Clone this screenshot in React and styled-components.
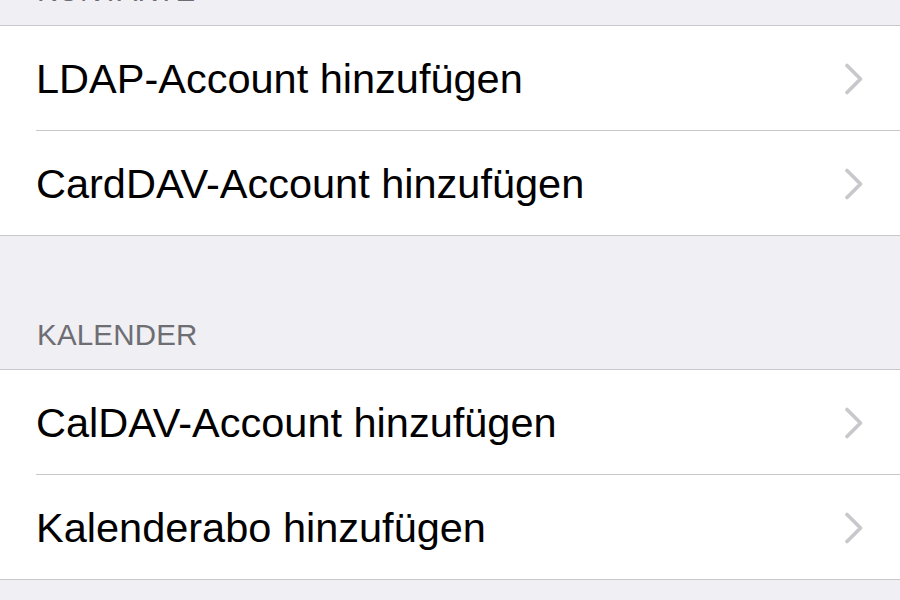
import React from 'react';
import styled, { createGlobalStyle } from 'styled-components';

const GlobalStyle = createGlobalStyle`
    html, body {
        margin: 0;
        padding: 0;
        background: #efeff4;
        font-family: "Liberation Sans", Arial, sans-serif;
        -webkit-font-smoothing: antialiased;
    }
`;

const sections = [
    {
        title: 'KONTAKTE',
        height: 25,
        items: ['LDAP-Account hinzufügen', 'CardDAV-Account hinzufügen'],
    },
    {
        title: 'KALENDER',
        height: 133,
        items: ['CalDAV-Account hinzufügen', 'Kalenderabo hinzufügen'],
    },
];

function Chevron() {
    return (
        <svg width="20" height="32" viewBox="0 0 20 32">
            <polyline
                points="3,2.5 16.5,16 3,29.5"
                fill="none"
                stroke="#c7c7cc"
                strokeWidth="3.6"
                strokeLinecap="round"
                strokeLinejoin="round"
            />
        </svg>
    );
}

export default function App() {
    return (
        <>
            <GlobalStyle />
            <Page>
                {sections.map((section) => (
                    <div key={section.title}>
                        <Header $height={section.height}>
                            <Label>{section.title}</Label>
                        </Header>
                        <Group>
                            {section.items.map((item, i) => (
                                <Row key={item} $last={i === section.items.length - 1}>
                                    <Title>{item}</Title>
                                    <Chevron />
                                </Row>
                            ))}
                        </Group>
                    </div>
                ))}
            </Page>
        </>
    );
}

const Page = styled.div`
    width: 900px;
    height: 600px;
    overflow: hidden;
    background: #efeff4;
`;

const Header = styled.div`
    height: ${(p) => p.$height}px;
    display: flex;
    flex-direction: column;
    justify-content: flex-end;
    overflow: hidden;
    padding: 0 0 19px 37px;
    box-sizing: border-box;
`;

const Label = styled.div`
    font-size: 29.5px;
    line-height: 30px;
    color: #6d6d72;
    letter-spacing: 0.2px;
`;

const Group = styled.div`
    background: #fff;
    border-top: 1px solid #c8c7cc;
    border-bottom: 1px solid #c8c7cc;
`;

const Row = styled.div`
    height: 104px;
    margin-left: 36px;
    padding-right: 36px;
    display: flex;
    align-items: center;
    justify-content: space-between;
    border-bottom: ${(p) => (p.$last ? 'none' : '1px solid #c8c7cc')};

    svg {
        margin-top: 1px;
    }
`;

const Title = styled.span`
    font-size: 41.5px;
    color: #000;
    margin-top: 1px;
`;
